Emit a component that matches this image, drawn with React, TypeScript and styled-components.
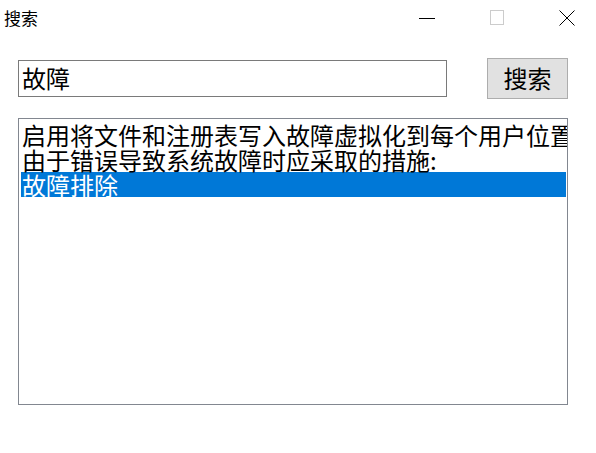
import React from "react";
import styled, { createGlobalStyle } from "styled-components";

const Global = createGlobalStyle`
  html, body {
    margin: 0;
    padding: 0;
    background: #ffffff;
  }
  body {
    font-family: "Noto Sans CJK SC", "Noto Sans", sans-serif;
    color: #000;
  }
`;

const Window = styled.div`
  width: 596px;
  height: 453px;
  background: #ffffff;
  display: flex;
  flex-direction: column;
  overflow: hidden;
`;

const TitleBar = styled.div`
  height: 36px;
  display: flex;
  align-items: center;
  justify-content: space-between;
  padding-left: 4px;
`;

const Title = styled.div`
  font-size: 17px;
  line-height: 22px;
  color: #000;
`;

const Controls = styled.div`
  display: flex;
  align-items: center;
  gap: 54px;
  margin-right: 21px;
`;

const Ctl = styled.div`
  width: 16px;
  height: 16px;
  display: flex;
  align-items: center;
  justify-content: center;
  svg {
    display: block;
  }
`;

const Body = styled.div`
  display: flex;
  flex-direction: column;
  padding: 22px 28px 0 18px;
  gap: 19px;
`;

const SearchRow = styled.div`
  display: flex;
  align-items: center;
  gap: 40px;
  height: 41px;
`;

const Field = styled.div`
  box-sizing: border-box;
  width: 429px;
  height: 37px;
  border: 1px solid #7a7a7a;
  background: #fff;
  font-size: 24px;
  line-height: 33px;
  padding: 0 3px;
  white-space: nowrap;
`;

const Button = styled.div`
  box-sizing: border-box;
  width: 81px;
  height: 41px;
  background: #e1e1e1;
  border: 1px solid #adadad;
  font-size: 24px;
  line-height: 37px;
  text-align: center;
`;

const ListBox = styled.div`
  box-sizing: border-box;
  width: 550px;
  height: 287px;
  border: 1px solid #828790;
  background: #fff;
  padding: 3px 1px 0 2px;
  overflow: hidden;
`;

const Item = styled.div<{ $selected?: boolean }>`
  height: 25px;
  font-size: 24px;
  line-height: 25px;
  padding-left: 1px;
  white-space: nowrap;
  background: ${(p) => (p.$selected ? "#0078d7" : "transparent")};
  color: ${(p) => (p.$selected ? "#ffffff" : "#000000")};
`;

const items = [
  "启用将文件和注册表写入故障虚拟化到每个用户位置",
  "由于错误导致系统故障时应采取的措施:",
  "故障排除",
];

export default function App() {
  return (
    <>
      <Global />
      <Window>
        <TitleBar>
          <Title>搜索</Title>
          <Controls>
            <Ctl>
              <svg width="16" height="16" viewBox="0 0 16 16">
                <line x1="0" y1="8.5" x2="16" y2="8.5" stroke="#000" strokeWidth="1" />
              </svg>
            </Ctl>
            <Ctl>
              <svg width="16" height="16" viewBox="0 0 16 16">
                <rect x="1.5" y="0.5" width="13" height="14" fill="none" stroke="#cccccc" strokeWidth="1" />
              </svg>
            </Ctl>
            <Ctl>
              <svg width="16" height="16" viewBox="0 0 16 16">
                <path d="M0.5 0.5 L15.5 15.5 M15.5 0.5 L0.5 15.5" stroke="#000" strokeWidth="1" fill="none" />
              </svg>
            </Ctl>
          </Controls>
        </TitleBar>
        <Body>
          <SearchRow>
            <Field>故障</Field>
            <Button>搜索</Button>
          </SearchRow>
          <ListBox>
            {items.map((t, i) => (
              <Item key={t} $selected={i === 2}>
                {t}
              </Item>
            ))}
          </ListBox>
        </Body>
      </Window>
    </>
  );
}
